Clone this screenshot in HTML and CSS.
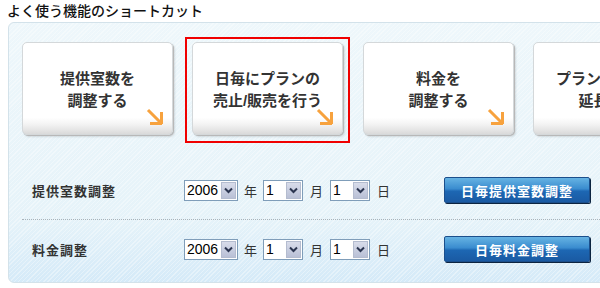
FILE: index.html
```html
<!DOCTYPE html>
<html lang="ja">
<head>
    <meta charset="UTF-8">
    <title>よく使う機能のショートカット</title>
    <link rel="stylesheet" href="styles.css">
</head>
<body>
    <h2 class="title">よく使う機能のショートカット</h2>
    <div class="panel">
        <div class="cards">
            <a class="card">提供室数を<br>調整する
                <svg class="arrow" width="18" height="18" viewBox="0 0 18 18"><path d="M2 2 L15 15 M4 15.5 H16 M15.5 4 V16" stroke="#f7a23e" stroke-width="3" fill="none"/></svg>
            </a>
            <div class="selected">
                <a class="card">日毎にプランの<br>売止/販売を行う
                    <svg class="arrow" width="18" height="18" viewBox="0 0 18 18"><path d="M2 2 L15 15 M4 15.5 H16 M15.5 4 V16" stroke="#f7a23e" stroke-width="3" fill="none"/></svg>
                </a>
            </div>
            <a class="card">料金を<br>調整する
                <svg class="arrow" width="18" height="18" viewBox="0 0 18 18"><path d="M2 2 L15 15 M4 15.5 H16 M15.5 4 V16" stroke="#f7a23e" stroke-width="3" fill="none"/></svg>
            </a>
            <a class="card">プランの販売を<br>延長する</a>
        </div>

        <div class="rows">
            <div class="row">
                <span class="label">提供室数調整</span>
                <span class="combo year"><span class="val">2006</span><span class="btn"><svg width="9" height="7" viewBox="0 0 9 7"><path d="M1 1.5 L4.5 5 L8 1.5" stroke="#2b3550" stroke-width="2" fill="none"/></svg></span></span>
                <span class="unit first">年</span>
                <span class="combo"><span class="val">1</span><span class="btn"><svg width="9" height="7" viewBox="0 0 9 7"><path d="M1 1.5 L4.5 5 L8 1.5" stroke="#2b3550" stroke-width="2" fill="none"/></svg></span></span>
                <span class="unit">月</span>
                <span class="combo"><span class="val">1</span><span class="btn"><svg width="9" height="7" viewBox="0 0 9 7"><path d="M1 1.5 L4.5 5 L8 1.5" stroke="#2b3550" stroke-width="2" fill="none"/></svg></span></span>
                <span class="unit">日</span>
                <button class="go">日毎提供室数調整</button>
            </div>
            <div class="row">
                <span class="label">料金調整</span>
                <span class="combo year"><span class="val">2006</span><span class="btn"><svg width="9" height="7" viewBox="0 0 9 7"><path d="M1 1.5 L4.5 5 L8 1.5" stroke="#2b3550" stroke-width="2" fill="none"/></svg></span></span>
                <span class="unit first">年</span>
                <span class="combo"><span class="val">1</span><span class="btn"><svg width="9" height="7" viewBox="0 0 9 7"><path d="M1 1.5 L4.5 5 L8 1.5" stroke="#2b3550" stroke-width="2" fill="none"/></svg></span></span>
                <span class="unit">月</span>
                <span class="combo"><span class="val">1</span><span class="btn"><svg width="9" height="7" viewBox="0 0 9 7"><path d="M1 1.5 L4.5 5 L8 1.5" stroke="#2b3550" stroke-width="2" fill="none"/></svg></span></span>
                <span class="unit">日</span>
                <button class="go">日毎料金調整</button>
            </div>
        </div>
    </div>
</body>
</html>
```

FILE: styles.css
```css
body {
    margin: 0;
    overflow: hidden;
    background: #fff;
    font-family: "Liberation Sans", "Noto Sans CJK JP", sans-serif;
    color: #333;
}
.title {
    margin: 0;
    padding: 1px 0 0 7px;
    height: 21px;
    font-size: 14px;
    font-weight: 500;
    line-height: 20px;
    color: #111;
}
.panel {
    width: 640px;
    margin-left: 8px;
    padding: 19px 0 4px 13px;
    border: 1px solid #d3e2ea;
    border-radius: 6px;
    background:
        repeating-linear-gradient(135deg, rgba(255,255,255,0.35) 0 1px, rgba(255,255,255,0) 1px 3px),
        linear-gradient(#eef7fb, #e6f3f9 75%, #d5eaf8);
}
.cards {
    display: flex;
    align-items: flex-start;
    gap: 19px;
    height: 93px;
}
.card {
    display: block;
    position: relative;
    flex: none;
    width: 151px;
    height: 93px;
    box-sizing: border-box;
    padding-top: 25px;
    border: 1px solid #d4d8da;
    border-radius: 5px;
    background: linear-gradient(#fff 82%, #f2f2f2 90%, #dadada 100%);
    box-shadow: 1px 1px 0 #b8b8b8, 2px 2px 2px rgba(0, 0, 0, 0.12);
    font-size: 15px;
    font-weight: bold;
    line-height: 22px;
    text-align: center;
    color: #333;
}
.arrow {
    position: absolute;
    right: 8px;
    bottom: 8px;
}
.selected {
    flex: none;
    margin: -5px -7px 0 -7px;
    padding: 3px 5px 6px 5px;
    border: 2px solid #f00000;
}
.selected + .card {
    margin-left: 1px;
}
.rows {
    margin-top: 26px;
}
.row {
    display: flex;
    align-items: center;
    height: 58px;
    padding-left: 10px;
    font-size: 13px;
}
.row + .row {
    border-top: 1px dotted #a9b3ba;
}
.label {
    width: 152px;
    font-weight: bold;
    letter-spacing: 1px;
}
.combo {
    display: flex;
    align-items: center;
    width: 40px;
    height: 21px;
    box-sizing: border-box;
    border: 1px solid #7f9db9;
    background: #fff;
    font-size: 14px;
}
.combo.year {
    width: 54px;
}
.val {
    flex: 1;
    padding-left: 2px;
    color: #000;
}
.btn {
    display: flex;
    align-items: center;
    justify-content: center;
    width: 15px;
    height: 17px;
    margin-right: 1px;
    border: 1px solid #b4bccf;
    box-sizing: border-box;
    background: linear-gradient(#d8dcea, #b9c0d6);
}
.unit {
    margin: 0 7px;
    color: #333;
}
.unit.first {
    margin: 0 6px;
}
.go {
    width: 146px;
    height: 26px;
    margin-left: 47px;
    border: 1px solid #1b4f8c;
    border-radius: 2px;
    background: linear-gradient(#66b3e3, #3a8ccf 45%, #1d67b3 55%, #1a5aa3);
    box-shadow: 1px 1px 0 #0c2440;
    font-family: "Liberation Sans", "Noto Sans CJK JP", sans-serif;
    font-size: 13px;
    font-weight: bold;
    letter-spacing: 1px;
    color: #fff;
}
```
